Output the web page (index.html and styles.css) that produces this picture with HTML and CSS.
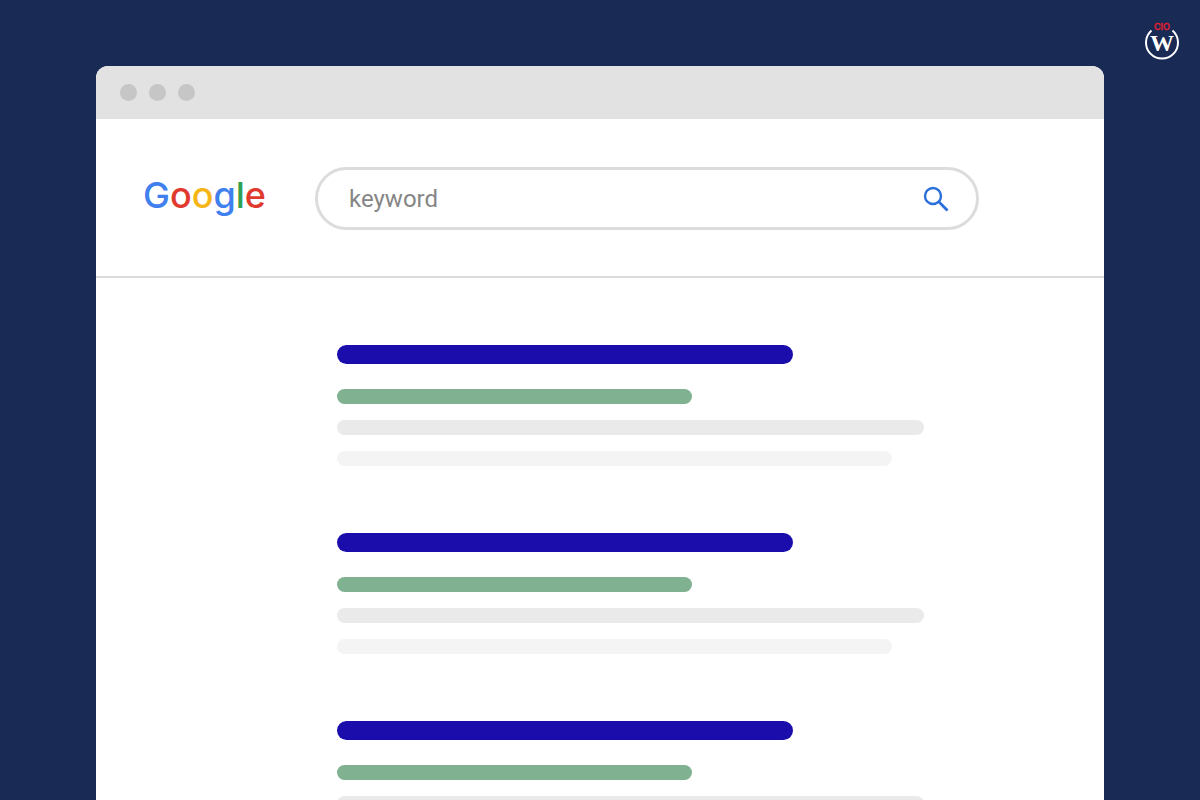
FILE: index.html
```html
<!DOCTYPE html>
<html lang="en">
<head>
    <meta charset="UTF-8">
    <meta name="viewport" content="width=device-width, initial-scale=1.0">
    <title>Google</title>
    <link rel="stylesheet" href="styles.css">
</head>
<body>
    <svg class="brand" width="40" height="42" viewBox="0 0 40 42" role="img" aria-label="CIO W">
        <path d="M9.5 10.5 A16 16 0 1 0 30.5 10.5" fill="none" stroke="#fff" stroke-width="2"/>
        <text class="brand-cio" x="20" y="10" text-anchor="middle">CIO</text>
        <text class="brand-w" x="20" y="31" text-anchor="middle">W</text>
    </svg>

    <div class="window">
        <div class="titlebar">
            <span class="dot"></span>
            <span class="dot"></span>
            <span class="dot"></span>
        </div>

        <header class="header">
            <div class="logo"><span class="blue">G</span><span class="red">o</span><span class="yellow">o</span><span class="blue">g</span><span class="green">l</span><span class="red">e</span></div>
            <form class="search">
                <input class="search-input" type="text" value="keyword" aria-label="Search">
                <button class="search-button" type="button" aria-label="Search">
                    <svg width="28" height="28" viewBox="0 0 28 28" fill="none" stroke="#2b6fdb">
                        <circle cx="12" cy="11" r="8" stroke-width="2.4"/>
                        <path d="M17.8 16.8 L26.5 25.5" stroke-width="2.8"/>
                    </svg>
                </button>
            </form>
        </header>

        <main class="results">
            <div class="result">
                <div class="bar title"></div>
                <div class="bar url"></div>
                <div class="bar text"></div>
                <div class="bar text-last"></div>
            </div>
            <div class="result">
                <div class="bar title"></div>
                <div class="bar url"></div>
                <div class="bar text"></div>
                <div class="bar text-last"></div>
            </div>
            <div class="result">
                <div class="bar title"></div>
                <div class="bar url"></div>
                <div class="bar text"></div>
                <div class="bar text-last"></div>
            </div>
        </main>
    </div>
</body>
</html>
```
FILE: styles.css
```css
* {
    box-sizing: border-box;
}
body {
    margin: 0;
    height: 100vh;
    padding: 66px 8% 0;
    overflow: hidden;
    background-color: #192a54;
    font-family: Roboto, Arial, sans-serif;
}
.brand {
    position: absolute;
    top: 20px;
    right: 18px;
}
.brand-cio {
    font-family: Inter, Arial, sans-serif;
    font-size: 9px;
    font-weight: 500;
    fill: #e8202e;
    stroke: #e8202e;
    stroke-width: 0.3px;
}
.brand-w {
    font-family: "Liberation Serif", serif;
    font-size: 24px;
    font-weight: bold;
    fill: #fff;
}
.window {
    height: 100%;
    background-color: #fff;
    border-radius: 12px 12px 0 0;
    overflow: hidden;
}
.titlebar {
    display: flex;
    align-items: center;
    gap: 12px;
    height: 53px;
    padding: 0 24px;
    background-color: #e2e2e2;
}
.dot {
    width: 17px;
    height: 17px;
    border-radius: 50%;
    background-color: #c6c6c6;
}
.header {
    display: flex;
    align-items: center;
    height: 159px;
    padding: 2px 125px 0 47px;
    border-bottom: 2px solid #dadada;
}
.logo {
    width: 172px;
    padding-bottom: 8px;
    font-family: Inter, sans-serif;
    font-size: 36px;
    font-weight: 500;
    line-height: 50px;
}
.blue {
    color: #4080ee;
}
.red {
    color: #e03a2e;
}
.yellow {
    color: #f6b516;
}
.green {
    color: #2ea250;
}
.search {
    display: flex;
    flex: 1;
    align-items: center;
    height: 63px;
    padding: 0 27px 0 31px;
    border: 3px solid #dcdcde;
    border-radius: 32px;
}
.search-input {
    flex: 1;
    min-width: 0;
    padding: 0;
    border: 0;
    outline: none;
    background: none;
    color: #868686;
    font-family: Roboto, Arial, sans-serif;
    font-size: 24px;
}
.search-button {
    display: flex;
    padding: 0;
    border: 0;
    background: none;
    cursor: pointer;
}
.results {
    display: flex;
    flex-direction: column;
    gap: 67px;
    padding: 67px 180px 67px 241px;
}
.result {
    display: flex;
    flex-direction: column;
    gap: 16px;
}
.bar {
    height: 15px;
    border-radius: 10px;
}
.title {
    width: 456px;
    height: 19px;
    margin-bottom: 9px;
    background-color: #1a0dab;
}
.url {
    width: 355px;
    background-color: #80b190;
}
.text {
    width: 587px;
    background-color: #eaeaea;
}
.text-last {
    width: 555px;
    background-color: #f4f4f4;
}
```
